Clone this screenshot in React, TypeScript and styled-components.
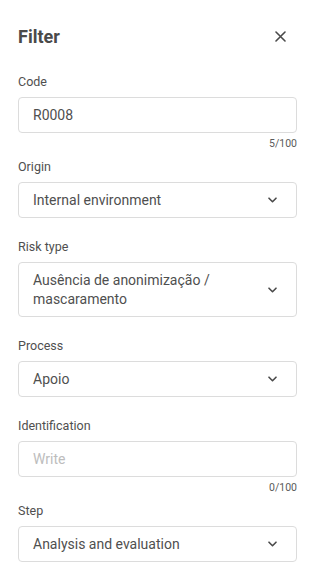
import React from "react";
import styled, { createGlobalStyle } from "styled-components";

const GlobalStyle = createGlobalStyle`
  html, body {
    margin: 0;
    padding: 0;
    background: #fff;
    font-family: Roboto, "Noto Sans", Arial, sans-serif;
    color: #4f4f4f;
  }
`;

const Panel = styled.div`
  width: 319px;
  box-sizing: border-box;
  padding: 24px 22px 0 18px;
  display: flex;
  flex-direction: column;
`;

const Header = styled.div`
  display: flex;
  align-items: center;
  justify-content: space-between;
  height: 24px;
  margin-bottom: 26px;
`;

const Title = styled.h1`
  margin: 0;
  font-size: 18px;
  font-weight: 700;
  color: #4a4a4a;
`;

const CloseButton = styled.button`
  border: none;
  background: none;
  padding: 0;
  width: 24px;
  height: 24px;
  margin-right: 5px;
  display: flex;
  align-items: center;
  justify-content: center;
  cursor: pointer;
`;

const Field = styled.div<{ hasCounter?: boolean }>`
  display: flex;
  flex-direction: column;
  margin-bottom: ${(p) => (p.hasCounter ? "8px" : "21px")};
`;

const Label = styled.label`
  font-size: 12.5px;
  line-height: 16px;
  margin-bottom: 7px;
  color: #4f4f4f;
`;

const Box = styled.div<{ tall?: boolean }>`
  box-sizing: border-box;
  border: 1px solid #dcdcdc;
  border-radius: 4px;
  min-height: ${(p) => (p.tall ? "55px" : "36px")};
  padding: 0 19px 0 14px;
  display: flex;
  align-items: center;
  justify-content: space-between;
  gap: 12px;
`;

const Value = styled.span<{ placeholder?: boolean }>`
  font-size: 14px;
  line-height: 19px;
  color: ${(p) => (p.placeholder ? "#bdbdbd" : "#4f4f4f")};
`;

const Counter = styled.div`
  align-self: flex-end;
  font-size: 10.5px;
  line-height: 14px;
  margin-top: 4px;
  color: #5a5a5a;
`;

const Chevron = () => (
  <svg width="9" height="6" viewBox="0 0 9 6" fill="none">
    <path d="M1 1.2l3.5 3.5 3.5-3.5" stroke="#4a4a4a" strokeWidth="1.6" strokeLinecap="round" strokeLinejoin="round" />
  </svg>
);

const CloseIcon = () => (
  <svg width="11" height="11" viewBox="0 0 11 11" fill="none">
    <path d="M1 1l9 9M10 1l-9 9" stroke="#4a4a4a" strokeWidth="1.6" strokeLinecap="round" />
  </svg>
);

const TextField: React.FC<{ label: string; value?: string; placeholder?: string; max: number }> = ({
  label,
  value,
  placeholder,
  max,
}) => (
  <Field hasCounter>
    <Label>{label}</Label>
    <Box>
      <Value placeholder={!value}>{value || placeholder}</Value>
    </Box>
    <Counter>
      {(value || "").length}/{max}
    </Counter>
  </Field>
);

const SelectField: React.FC<{ label: string; value: React.ReactNode; tall?: boolean }> = ({
  label,
  value,
  tall,
}) => (
  <Field>
    <Label>{label}</Label>
    <Box tall={tall}>
      <Value>{value}</Value>
      <Chevron />
    </Box>
  </Field>
);

export default function App() {
  return (
    <>
      <GlobalStyle />
      <Panel>
        <Header>
          <Title>Filter</Title>
          <CloseButton aria-label="Close">
            <CloseIcon />
          </CloseButton>
        </Header>
        <TextField label="Code" value="R0008" max={100} />
        <SelectField label="Origin" value="Internal environment" />
        <SelectField
          label="Risk type"
          tall
          value={
            <>
              Ausência de anonimização /<br />
              mascaramento
            </>
          }
        />
        <SelectField label="Process" value="Apoio" />
        <TextField label="Identification" placeholder="Write" max={100} />
        <SelectField label="Step" value="Analysis and evaluation" />
      </Panel>
    </>
  );
}
